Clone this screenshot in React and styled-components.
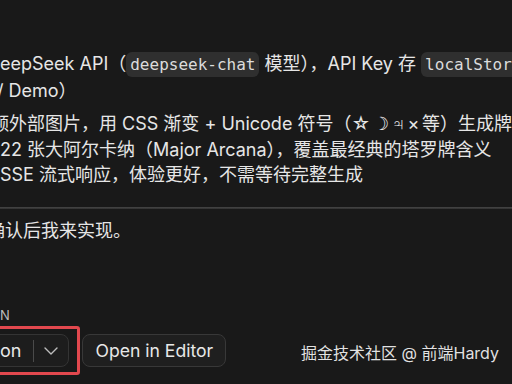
import React from "react";
import styled, { createGlobalStyle } from "styled-components";

const Global = createGlobalStyle`
  html, body { margin: 0; padding: 0; background: #191919; }
  body { overflow: hidden; }
`;

const Page = styled.div`
  position: relative;
  width: 512px;
  height: 384px;
  overflow: hidden;
  background: #191919;
  color: #e6e6e6;
  font-family: "Inter", "Noto Sans CJK SC", sans-serif;
  font-size: 18px;
`;

const Content = styled.div`
  display: flex;
  flex-direction: column;
  padding-top: 51px;
`;

const Line = styled.div`
  white-space: nowrap;
  line-height: 25.5px;
  margin-left: ${(p) => p.$shift || 0}px;
  margin-top: ${(p) => p.$top || 0}px;
`;

const Glyphs = styled.span`
  word-spacing: -2.5px;
`;

const Code = styled.code`
  font-family: "DejaVu Sans Mono", "Liberation Mono", monospace;
  font-size: 16px;
  background: #2f2f2f;
  color: #dcdcdc;
  border-radius: 6px;
  padding: 3px 4px;
`;

const Separator = styled.hr`
  border: none;
  height: 2px;
  margin: 19px 0 9px 0;
  background: linear-gradient(#474747, #303030);
`;

const Label = styled.div`
  font-size: 13px;
  color: #bdbdbd;
  letter-spacing: 0.5px;
  margin-top: 64px;
  line-height: 16px;
`;

const Row = styled.div`
  display: flex;
  align-items: center;
  gap: 2px;
  margin-left: -20px;
  margin-top: 3px;
`;

const Highlight = styled.div`
  border: 3px solid #e2484e;
  border-radius: 3px;
  padding: 5px 8px;
`;

const Group = styled.div`
  display: flex;
  align-items: center;
  height: 33px;
  box-sizing: border-box;
  border: 1px solid #343434;
  border-radius: 8px;
  background: #1d1d1d;
  padding: 0 10px 0 8px;
  font-size: 18px;
  color: #e8e8e8;
`;

const Divider = styled.span`
  width: 1px;
  height: 22px;
  background: #4a4a4a;
  margin: 0 10px 0 12px;
`;

const Button = styled.button`
  height: 33px;
  box-sizing: border-box;
  border: 1px solid #383838;
  border-radius: 8px;
  background: #1f1f1f;
  color: #e8e8e8;
  font-family: inherit;
  font-size: 17.6px;
  padding: 0 12px;
`;

const Watermark = styled.div`
  position: absolute;
  right: 13px;
  bottom: 22px;
  font-size: 16px;
  line-height: 18px;
  color: rgba(255, 255, 255, 0.88);
  white-space: nowrap;
`;

const Chevron = () => (
  <svg width="14" height="8" viewBox="0 0 14 8" fill="none">
    <path d="M1 1l6 6 6-6" stroke="#bdbdbd" strokeWidth="1.4" strokeLinecap="round" strokeLinejoin="round" />
  </svg>
);

export default function App() {
  return (
    <Page>
      <Global />
      <Content>
        <Line $shift={-13}>
          DeepSeek API（<Code>deepseek-chat</Code> 模型），API Key 存 <Code>localStorage</Code>
        </Line>
        <Line $shift={-3}>/ Demo）</Line>
        <Line $shift={-9} $top={8}>
          额外部图片，用 CSS 渐变 + Unicode 符号（<Glyphs>☆ ☽ ♃ × 等</Glyphs>）生成牌面
        </Line>
        <Line>22 张大阿尔卡纳（Major Arcana），覆盖最经典的塔罗牌含义</Line>
        <Line>SSE 流式响应，体验更好，不需等待完整生成</Line>
        <Separator />
        <Line $shift={-13}>确认后我来实现。</Line>
        <Label>N</Label>
        <Row>
          <Highlight>
            <Group>
              on
              <Divider />
              <Chevron />
            </Group>
          </Highlight>
          <Button>Open in Editor</Button>
        </Row>
      </Content>
      <Watermark>掘金技术社区 @ 前端Hardy</Watermark>
    </Page>
  );
}
